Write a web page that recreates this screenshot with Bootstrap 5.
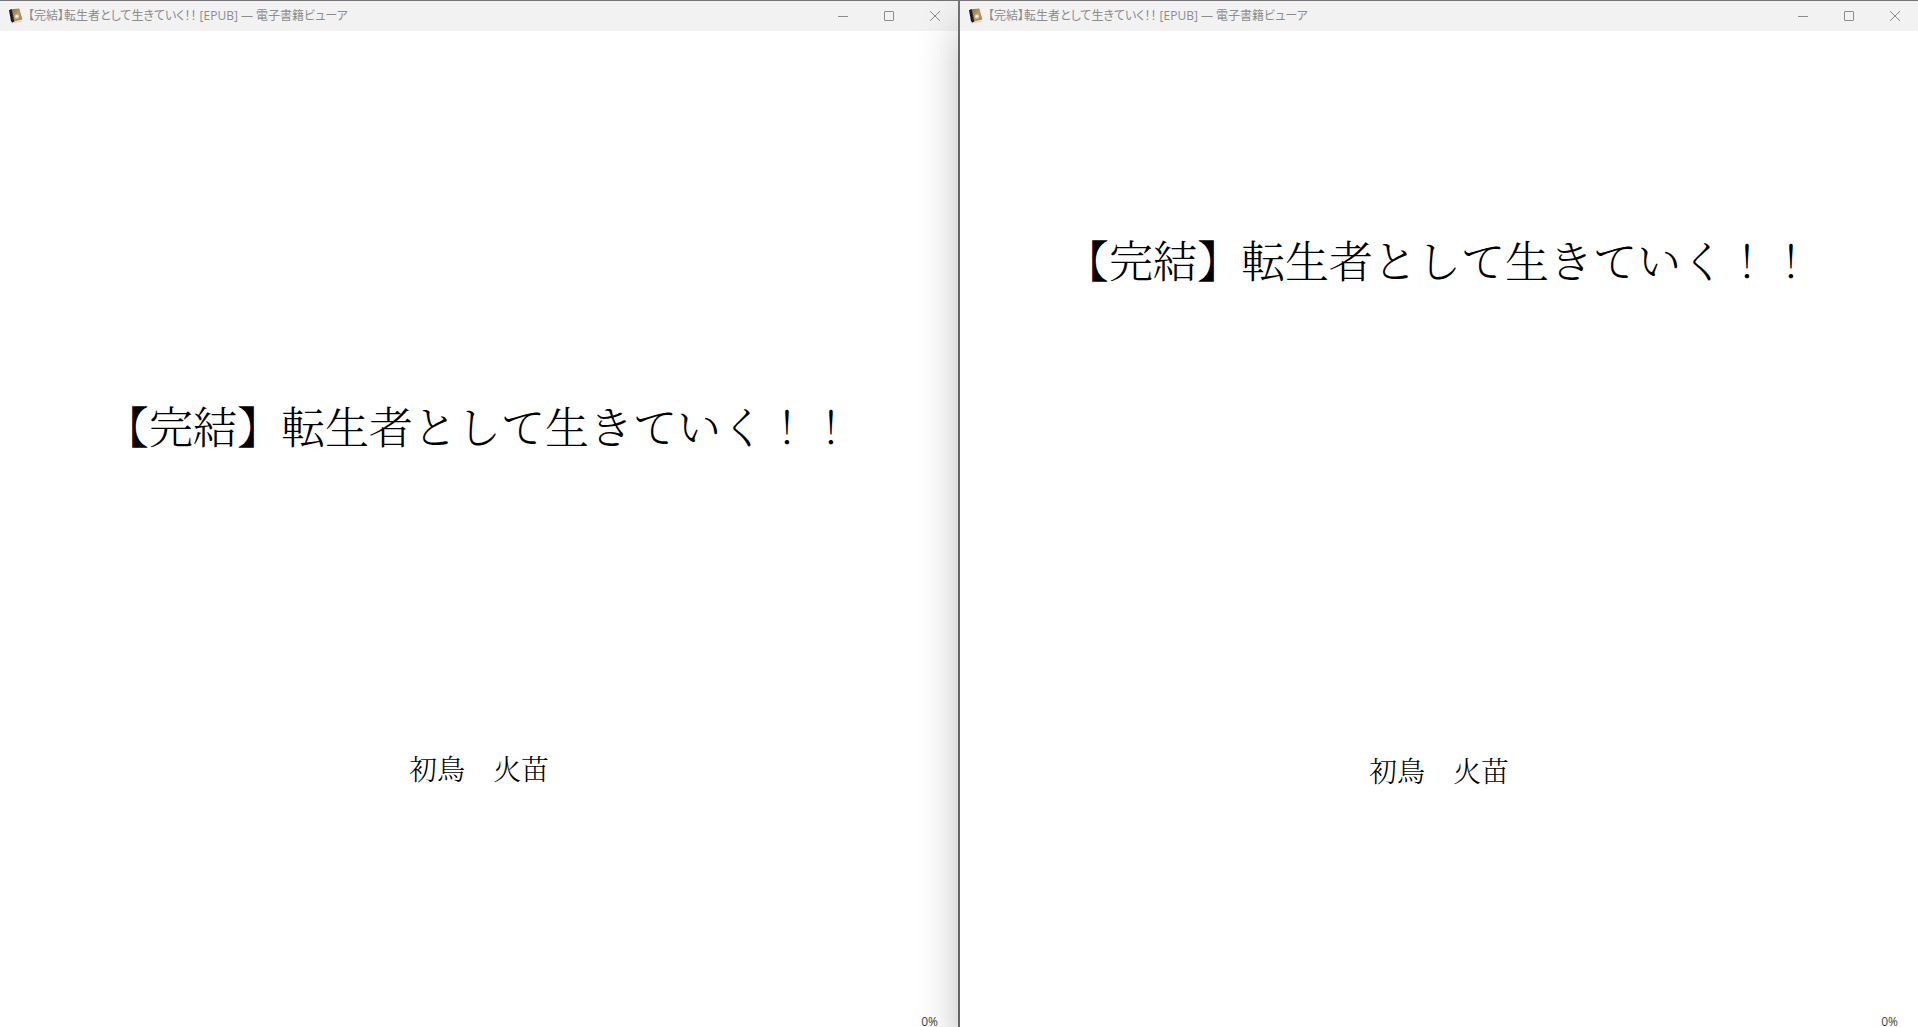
<!DOCTYPE html>
<html lang="ja">
<head>
<meta charset="utf-8">
<meta name="viewport" content="width=device-width, initial-scale=1">
<title>電子書籍ビューア</title>
<link href="https://cdn.jsdelivr.net/npm/bootstrap@5.3.0/dist/css/bootstrap.min.css" rel="stylesheet">
<style>
  body { background: #fff; }
  .desktop { display: grid; grid-template-columns: calc(50% + 1px) 1fr; }
  .viewer { min-height: 100vh; border-top: 1px solid #757375; background: #fff; min-width: 0; }
  .viewer-left { border-right: 2px solid #757375; }
  .viewer-right { box-shadow: 0 28px 40px rgba(0, 0, 0, .28); clip-path: inset(0 0 0 -70px); }
  .titlebar { height: 30px; background: #f2f2f2; color: #8c8c8c; padding-left: 8px; }
  .titlebar h1 { font: 12px/18px "Open Sans", "Noto Sans CJK JP", sans-serif; font-feature-settings: "palt"; margin: 0; }
  .win-btn { width: 46px; height: 30px; border: 0; background: transparent; color: #8c8c8c; padding: 0; }
  .sheet { font-family: "Noto Serif CJK JP", "Noto Serif JP", "Noto Sans CJK JP", serif; font-weight: 300; color: #000; }
  .book-title { font-size: 44px; line-height: 66px; font-weight: 300; margin: 0; }
  .author { font-size: 28px; line-height: 42px; margin: 0; }
  .viewer-left .book-title { padding-top: 361px; }
  .viewer-left .author { padding-top: 289px; }
  .viewer-right .book-title { padding-top: 195px; }
  .viewer-right .author { padding-top: 457px; }
  .progress-note { font: 12px/16px "Open Sans", sans-serif; color: #3c4043; padding-right: 20px; height: 13px; }
</style>
</head>
<body class="overflow-hidden">
<svg class="position-absolute" width="0" height="0" aria-hidden="true">
  <defs>
    <linearGradient id="cover" x1="0" y1="0" x2="1" y2="1">
      <stop offset="0" stop-color="#8b6d43"/><stop offset=".5" stop-color="#c39a5c"/><stop offset="1" stop-color="#a57c3f"/>
    </linearGradient>
    <symbol id="book" viewBox="0 0 16 16">
      <path d="M2 14.5 5 15.6 14 13.4 13 12z" fill="#cfcfcf"/>
      <path d="M1 2.2 3.2 1.2 5.6 13.6 4.6 14.6 3 13.2z" fill="#161616"/>
      <path d="M3 1.2 11.4.4 14.4 11.4 5.6 13.8z" fill="url(#cover)"/>
      <path d="M2.4 1.6 3.8 1.3 6.4 13.4 4.8 14.2z" fill="#29251f"/>
      <path d="M5 14.2 14.4 11.6V12.4L5.2 15z" fill="#eee9df"/>
      <circle cx="9" cy="8.4" r="2.2" fill="#b9c9dc"/>
      <circle cx="8.8" cy="8.2" r="1.3" fill="#e4eef8"/>
    </symbol>
    <symbol id="minimize" viewBox="0 0 12 12"><path d="M1 6.5h10" stroke="currentColor"/></symbol>
    <symbol id="maximize" viewBox="0 0 12 12"><rect x="1.5" y="1.5" width="9" height="9" rx=".5" fill="none" stroke="currentColor"/></symbol>
    <symbol id="close" viewBox="0 0 12 12"><path d="M1 1l10 10M11 1L1 11" stroke="currentColor"/></symbol>
  </defs>
</svg>
<main class="desktop">
  <section class="viewer viewer-left d-flex flex-column">
    <header class="titlebar d-flex align-items-center">
      <svg width="16" height="16" aria-hidden="true"><use href="#book"/></svg>
      <h1 class="ps-1 flex-grow-1 text-truncate">【完結】転生者として生きていく！！ [EPUB] — 電子書籍ビューア</h1>
      <button class="win-btn d-flex align-items-center justify-content-center" type="button" aria-label="最小化"><svg width="12" height="12"><use href="#minimize"/></svg></button>
      <button class="win-btn d-flex align-items-center justify-content-center" type="button" aria-label="最大化"><svg width="12" height="12"><use href="#maximize"/></svg></button>
      <button class="win-btn d-flex align-items-center justify-content-center" type="button" aria-label="閉じる"><svg width="12" height="12"><use href="#close"/></svg></button>
    </header>
    <article class="sheet flex-grow-1 text-center">
      <h2 class="book-title">【完結】転生者として生きていく！！</h2>
      <p class="author">初鳥　火苗</p>
    </article>
    <footer class="progress-note text-end">0%</footer>
  </section>
  <section class="viewer viewer-right d-flex flex-column position-relative">
    <header class="titlebar d-flex align-items-center">
      <svg width="16" height="16" aria-hidden="true"><use href="#book"/></svg>
      <h1 class="ps-1 flex-grow-1 text-truncate">【完結】転生者として生きていく！！ [EPUB] — 電子書籍ビューア</h1>
      <button class="win-btn d-flex align-items-center justify-content-center" type="button" aria-label="最小化"><svg width="12" height="12"><use href="#minimize"/></svg></button>
      <button class="win-btn d-flex align-items-center justify-content-center" type="button" aria-label="最大化"><svg width="12" height="12"><use href="#maximize"/></svg></button>
      <button class="win-btn d-flex align-items-center justify-content-center" type="button" aria-label="閉じる"><svg width="12" height="12"><use href="#close"/></svg></button>
    </header>
    <article class="sheet flex-grow-1 text-center">
      <h2 class="book-title">【完結】転生者として生きていく！！</h2>
      <p class="author">初鳥　火苗</p>
    </article>
    <footer class="progress-note text-end">0%</footer>
  </section>
</main>
<script src="https://cdn.jsdelivr.net/npm/bootstrap@5.3.0/dist/js/bootstrap.bundle.min.js"></script>
</body>
</html>
